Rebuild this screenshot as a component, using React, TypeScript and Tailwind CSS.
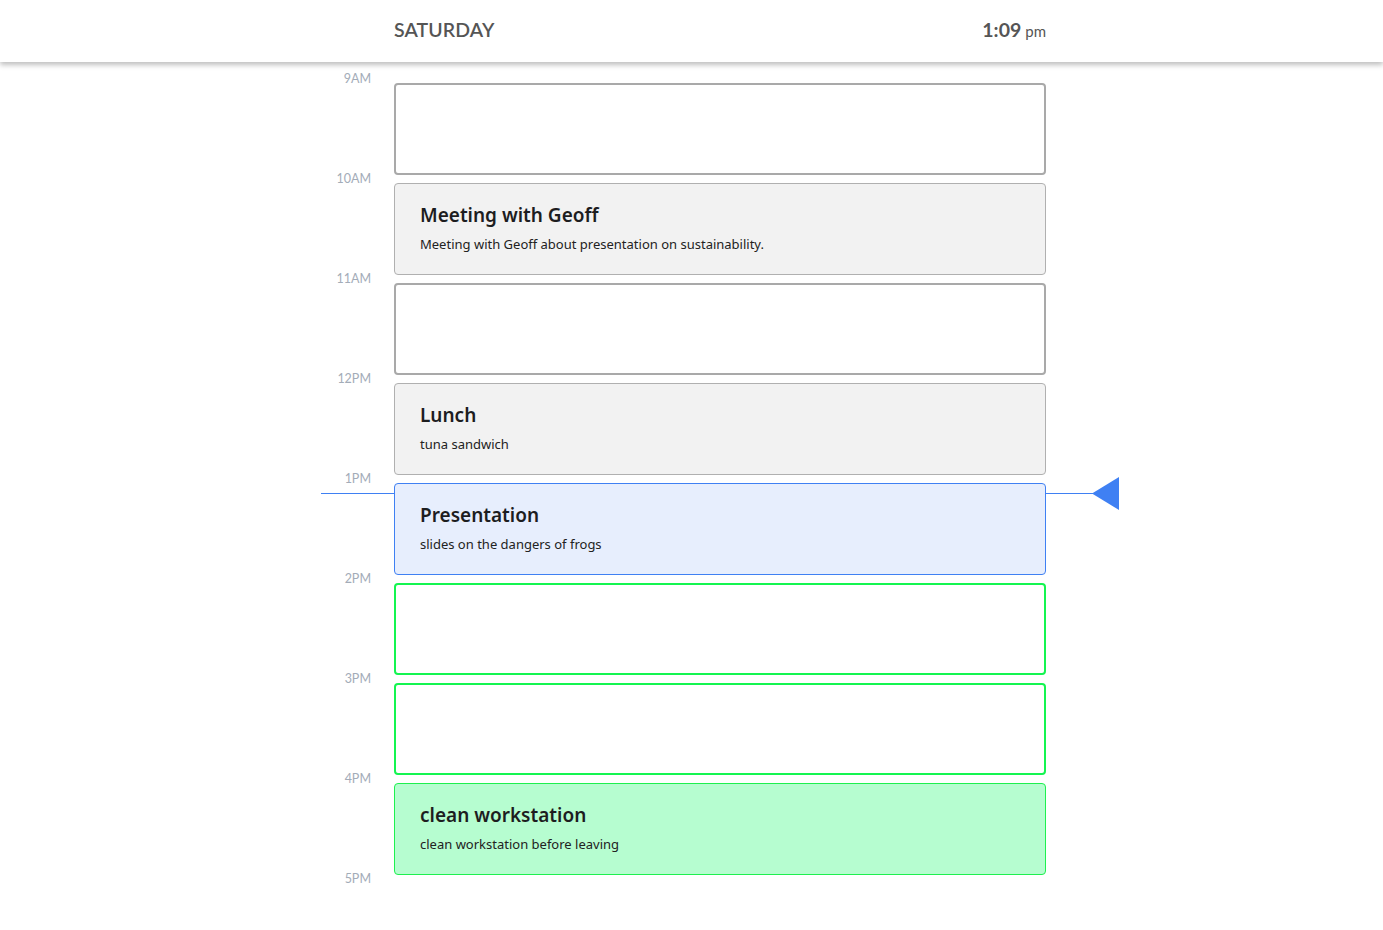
import React from "react";

type Slot = {
  label: string;
  kind: "empty" | "event" | "current" | "future" | "futureEvent";
  title?: string;
  desc?: string;
};

const slots: Slot[] = [
  { label: "9AM", kind: "empty" },
  { label: "10AM", kind: "event", title: "Meeting with Geoff", desc: "Meeting with Geoff about presentation on sustainability." },
  { label: "11AM", kind: "empty" },
  { label: "12PM", kind: "event", title: "Lunch", desc: "tuna sandwich" },
  { label: "1PM", kind: "current", title: "Presentation", desc: "slides on the dangers of frogs" },
  { label: "2PM", kind: "future" },
  { label: "3PM", kind: "future" },
  { label: "4PM", kind: "futureEvent", title: "clean workstation", desc: "clean workstation before leaving" },
];

const cardClass: Record<Slot["kind"], string> = {
  empty: "border-2 border-[#a9a9a9] bg-white",
  event: "border border-[#b0b0b0] bg-[#f2f2f2]",
  current: "border border-[#3f80f3] bg-[#e7eefd]",
  future: "border-2 border-[#14f550] bg-white",
  futureEvent: "border border-[#1ef04f] bg-[#b6fdd0]",
};

const cardFont = { fontFamily: '"Noto Sans", "Open Sans", sans-serif' };

export default function App() {
  return (
    <div className="min-h-[930px] bg-white" style={{ fontFamily: 'Lato, "Noto Sans", sans-serif' }}>
      <header className="relative z-10 h-[62px] bg-white shadow-[0_3px_5px_rgba(0,0,0,0.25)]">
        <div className="ml-[394px] flex h-full w-[652px] items-center justify-between pb-[2px]">
          <div className="text-[19.5px] font-semibold tracking-[0.1px] text-[#555555]">SATURDAY</div>
          <div className="text-[#555555]">
            <span className="text-[19.5px] font-bold">1:09</span>
            <span className="ml-[4px] text-[15px]">pm</span>
          </div>
        </div>
      </header>
      <main className="relative ml-[321px] pt-[9px]">
        {slots.map((s, i) => (
          <div key={i} className="relative flex h-[100px]">
            <div className="w-[50px] text-right text-[12.5px] leading-[16px] text-[#a3acb8]">{s.label}</div>
            {s.kind === "current" && (
              <>
                <div className="absolute left-0 top-[22px] h-px w-[774px] bg-[#3f80f3]" />
                <svg className="absolute left-[771px] top-[6px]" width="28" height="33" viewBox="0 0 28 33">
                  <polygon points="0,16.5 27,0 27,33" fill="#3f80f3" />
                </svg>
              </>
            )}
            <div
              className={`relative ml-[23px] mt-[12px] h-[92px] w-[652px] rounded-[4px] px-[25px] pt-[17px] ${cardClass[s.kind]}`}
              style={cardFont}
            >
              {s.title && (
                <>
                  <div className="text-[19px] font-semibold leading-[28px] text-[#1d1d1f]">{s.title}</div>
                  <div className="mt-[6px] text-[13px] leading-[18px] text-[#222222]">{s.desc}</div>
                </>
              )}
            </div>
          </div>
        ))}
        <div className="w-[50px] text-right text-[12.5px] leading-[16px] text-[#a3acb8]">5PM</div>
      </main>
    </div>
  );
}
